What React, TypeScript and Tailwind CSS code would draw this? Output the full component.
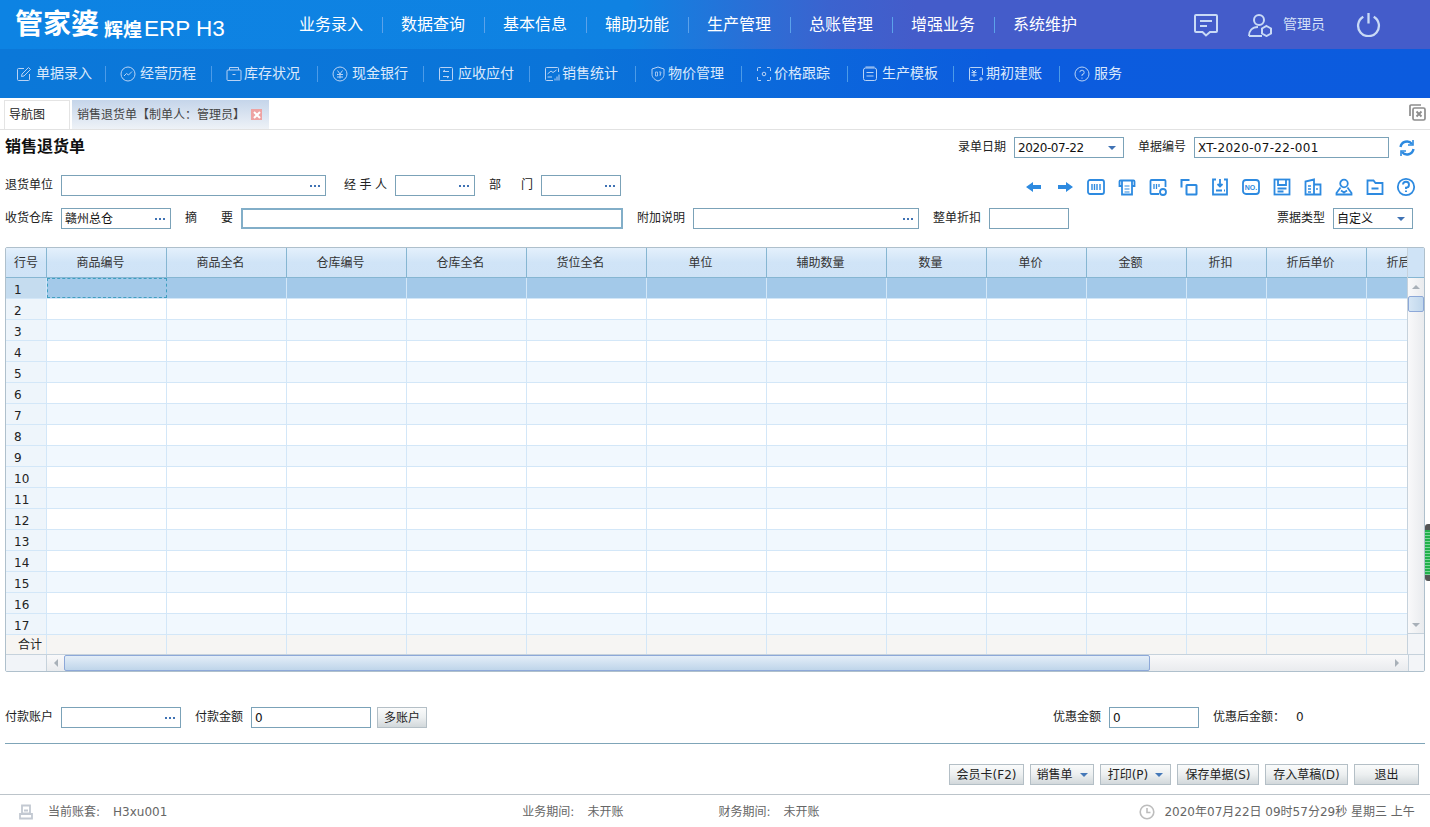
import type { ReactNode } from "react";

const cjk = "font-['DejaVu_Sans','Noto_Sans_CJK_SC',sans-serif]";

// white line icons for the second nav bar, all on a 16x16 box
const navIcons: Record<string, ReactNode> = {
  edit: (
    <>
      <path d="M8 2.500H2.500a1 1 0 0 0-1 1v10a1 1 0 0 0 1 1h10a1 1 0 0 0 1-1V8" />
      <path d="M5.500 10.500l.5-2.500L12.500 1.500l2 2L8 10z" />
    </>
  ),
  trend: (
    <>
      <circle cx="8" cy="8" r="7" />
      <path d="M4 10l2.500-2.500 2 1.500L12 5.500" />
    </>
  ),
  box: (
    <>
      <rect x="1" y="4" width="14" height="10.500" rx="1" />
      <path d="M3.500 4V1.500h9V4M6.500 8.500h3" />
    </>
  ),
  yen: (
    <>
      <circle cx="8" cy="8" r="7" />
      <path d="M5.500 4.500L8 8l2.500-3.500M5 8.500h6M5 11h6M8 8v4.500" />
    </>
  ),
  swap: (
    <>
      <rect x="1.500" y="1.500" width="13" height="13" rx="1" />
      <path d="M11 5.500H5L7 4M5 10.500h6L9 12" />
    </>
  ),
  chart: (
    <>
      <path d="M14.500 6V2.500a1 1 0 0 0-1-1h-11a1 1 0 0 0-1 1v11a1 1 0 0 0 1 1H9" />
      <path d="M3.500 8L7 5l2 1.500L12.500 4M3.500 11H8M11 14.500v-2M13 14.500v-4M15 14.500v-6" />
    </>
  ),
  shield: (
    <>
      <path d="M8 1l6 2v5.500c0 3-3 5.500-6 6.500-3-1-6-3.500-6-6.500V3z" />
      <path d="M5.500 6h2v4h-2zM9 6h2l-1 4M9.500 8h1.500" strokeWidth="0.800" />
    </>
  ),
  scan: (
    <>
      <path d="M5 1.500H2.500a1 1 0 0 0-1 1V5M11 1.500h2.500a1 1 0 0 1 1 1V5M5 14.500H2.500a1 1 0 0 1-1-1V11M11 14.500h2.500a1 1 0 0 0 1-1V11" />
      <circle cx="8" cy="8" r="1.800" />
    </>
  ),
  template: (
    <>
      <rect x="1.500" y="2" width="13" height="12.500" rx="2" />
      <path d="M4.500 6.500h7M4.500 10h7M3.500 1h9" />
    </>
  ),
  ledger: (
    <>
      <path d="M14.500 9V2.500a1 1 0 0 0-1-1h-11a1 1 0 0 0-1 1v11a1 1 0 0 0 1 1H10" />
      <path d="M4 4l2 2 2-2M3.500 6.500h5M3.500 9h5M6 6v5M13 11v4M11 13h4" />
    </>
  ),
  help: (
    <>
      <circle cx="8" cy="8" r="7" />
      <path d="M5.800 6.200A2.200 2.200 0 1 1 8 8.600V10M8 11.600v1" />
    </>
  ),
};

const topMenu = ["业务录入", "数据查询", "基本信息", "辅助功能", "生产管理", "总账管理", "增强业务", "系统维护"];

const subMenu = [
  { label: "单据录入", icon: "edit", pad: "pl-[4px]" },
  { label: "经营历程", icon: "trend", pad: "pl-[4px]" },
  { label: "库存状况", icon: "box", pad: "pl-[2px]" },
  { label: "现金银行", icon: "yen", pad: "pl-[4px]" },
  { label: "应收应付", icon: "swap", pad: "pl-[4px]" },
  { label: "销售统计", icon: "chart", pad: "pl-[2px]" },
  { label: "物价管理", icon: "shield", pad: "pl-[2px]" },
  { label: "价格跟踪", icon: "scan", pad: "pl-[2px]" },
  { label: "生产模板", icon: "template", pad: "pl-[4px]" },
  { label: "期初建账", icon: "ledger", pad: "pl-[2px]" },
  { label: "服务", icon: "help", pad: "pl-[4px]" },
];

const columns = [
  { title: "商品编号", width: "w-[120px]" },
  { title: "商品全名", width: "w-[120px]" },
  { title: "仓库编号", width: "w-[120px]" },
  { title: "仓库全名", width: "w-[120px]" },
  { title: "货位全名", width: "w-[120px]" },
  { title: "单位", width: "w-[120px]" },
  { title: "辅助数量", width: "w-[120px]" },
  { title: "数量", width: "w-[100px]" },
  { title: "单价", width: "w-[100px]" },
  { title: "金额", width: "w-[100px]" },
  { title: "折扣", width: "w-[80px]" },
  { title: "折后单价", width: "w-[100px]" },
  { title: "折后金额", width: "w-[100px]" },
];

const rows = Array.from({ length: 17 }, (_, i) => i + 1);

// toolbar glyphs, 20x20, filled in the same blue
const toolIcons: ReactNode[] = [
  <path key="a" d="M2 10l7-5v3h8v4H9v3z" fill="#2d8ae0" stroke="none" />,
  <path key="b" d="M18 10l-7-5v3H3v4h8v3z" fill="#2d8ae0" stroke="none" />,
  <g key="c">
    <rect x="2" y="3" width="16" height="14" rx="2" />
    <path d="M6 7v6M8.500 7v6M11 7v6M14 7v6" strokeWidth="1.400" />
  </g>,
  <g key="d">
    <path d="M5 9H2.500V4.500a1 1 0 0 1 1-1h13a1 1 0 0 1 1 1V9H15" />
    <path d="M5 3.500V17.500h10V3.500" />
    <path d="M7.500 9h5M7.500 12h5M7.500 15h5" strokeWidth="1.200" />
  </g>,
  <g key="e">
    <path d="M11 17H3.500a1 1 0 0 1-1-1V4a1 1 0 0 1 1-1h13a1 1 0 0 1 1 1v6" />
    <path d="M6 7v5M8.500 7v5M11 7v3" strokeWidth="1.300" />
    <circle cx="15" cy="15" r="3" />
  </g>,
  <g key="f">
    <path d="M2.500 10.500V3h8" strokeWidth="2" />
    <rect x="7.500" y="8" width="10" height="9.500" rx="0.500" strokeWidth="2" />
  </g>,
  <g key="g">
    <path d="M6 2.500H3v15h14v-15h-3" />
    <path d="M10 2v7M7.500 7l2.500 2.500L12.500 7M6 13.500h6M14 13.500h1" />
  </g>,
  <g key="h">
    <rect x="2" y="3" width="16" height="14" rx="3" />
    <text x="10" y="13" textAnchor="middle" fontSize="7" fontWeight="700" fill="#2d8ae0" stroke="none" fontFamily="'Liberation Sans',sans-serif">
      NO.
    </text>
  </g>,
  <g key="i">
    <rect x="2.500" y="2.500" width="15" height="15" />
    <path d="M6 2.500v5.500h8V2.500M5.500 11.500h9M5.500 14.500h6" />
  </g>,
  <g key="j">
    <path d="M2.500 17.500V4.500L11 2.500v15zM11 7.500h6.500v10H11" />
    <path d="M5 9h3M5 12h3M5 15h3M14 11v2" strokeWidth="1.400" />
  </g>,
  <g key="k">
    <circle cx="10" cy="6.500" r="3.800" />
    <path d="M6.500 10.500L2.500 16v1.500h15V16l-4-5.500M7 13.500l3 2 3-2" />
  </g>,
  <g key="l">
    <path d="M2.500 17V3.500h6l2 2.500h7v11z" />
    <path d="M6.500 11.500h7" strokeWidth="2" />
  </g>,
  <g key="m">
    <circle cx="10" cy="10" r="8.200" />
    <path d="M7 7.500a3 3 0 1 1 3 3.200V12M10 13.600v1.500" strokeWidth="1.900" />
  </g>,
];

function FieldLabel({ children, className = "" }: { children: ReactNode; className?: string }) {
  return <span className={`text-[12px] leading-[21px] text-[#222] whitespace-pre ${className}`}>{children}</span>;
}

// label whose characters are spread over a fixed width
function SpreadLabel({ chars, className }: { chars: string[]; className: string }) {
  return (
    <span className={`flex justify-between text-[12px] leading-[21px] text-[#222] ${className}`}>
      {chars.map((c) => (
        <span key={c}>{c}</span>
      ))}
    </span>
  );
}

function Field({
  width,
  value,
  dots,
  arrow,
  thick,
  valueClass = "",
}: {
  width: string;
  value?: string;
  dots?: boolean;
  arrow?: boolean;
  thick?: boolean;
  valueClass?: string;
}) {
  return (
    <div
      className={`${width} h-[21px] flex items-center justify-between bg-white pl-[3px] pr-[4px] text-[12px] text-[#111] ${
        thick ? "border-2 border-[#82aec8]" : "border border-[#7ba2b8]"
      }`}
    >
      <span className={`whitespace-nowrap ${valueClass}`}>{value}</span>
      {dots && (
        <span className="flex gap-[2px] pr-[1px]">
          <i className="size-[2px] bg-[#3f72b4]" />
          <i className="size-[2px] bg-[#3f72b4]" />
          <i className="size-[2px] bg-[#3f72b4]" />
        </span>
      )}
      {arrow && <i className="mr-[3px] border-x-[4px] border-t-[4px] border-x-transparent border-t-[#3f72b4]" />}
    </div>
  );
}

function ActionButton({ children, width, arrow }: { children: ReactNode; width: string; arrow?: boolean }) {
  return (
    <div
      className={`${width} h-[21px] flex items-center justify-center gap-[7px] border border-[#b4bfc6] bg-gradient-to-b from-[#fafbfb] via-[#eceff0] to-[#d2d8db] text-[12px] text-[#222]`}
    >
      <span className="whitespace-nowrap">{children}</span>
      {arrow && <i className="border-x-[4px] border-t-[4px] border-x-transparent border-t-[#4478b8]" />}
    </div>
  );
}

export default function App() {
  return (
    <div className={`relative h-[827px] w-[1430px] overflow-hidden bg-white ${cjk}`}>
      {/* top bar */}
      <header className="flex h-[49px] items-center bg-[linear-gradient(90deg,#0d83e3_0%,#0f82e2_44%,#3b63cf_58%,#445cca_64%,#445cca_100%)]">
        <div className="ml-[15px] flex w-[284px] items-end whitespace-nowrap text-white">
          <span className="w-[89px] text-[28px] font-bold leading-[36px]">管家婆</span>
          <span className="mb-[1px] w-[40px] text-[19px] font-bold leading-[24px]">辉煌</span>
          <span className="mb-[1px] font-['Liberation_Sans',sans-serif] text-[22.500px] leading-[26px]">ERP H3</span>
        </div>
        <nav className="flex items-center">
          {topMenu.map((item, i) => (
            <div key={item} className="flex items-center">
              <span className="w-[64px] whitespace-nowrap text-[16px] text-white">{item}</span>
              {i < topMenu.length - 1 && <i className="mx-[18.500px] h-[16px] w-px bg-[#5ba2ea]" />}
            </div>
          ))}
        </nav>
        <div className="ml-[116px] flex items-center">
          <svg viewBox="0 0 26 24" className="h-[24px] w-[26px]" fill="none" stroke="#c9daf6" strokeWidth="2">
            <path d="M3 2h20a1 1 0 0 1 1 1v15a1 1 0 0 1-1 1h-6l-4 3.500L9.500 19H3a1 1 0 0 1-1-1V3a1 1 0 0 1 1-1z" />
            <path d="M7 8h12M7 13h7" />
          </svg>
          <svg viewBox="0 0 26 24" className="ml-[28px] h-[24px] w-[26px]" fill="none" stroke="#c9daf6" strokeWidth="2">
            <circle cx="12" cy="7" r="5" />
            <path d="M2 23c0-5 3-9 9-9M2 23h13" />
            <path d="M19.500 13l4.500 2.500v5L19.500 23 15 20.500v-5z" />
          </svg>
          <span className="ml-[10px] text-[14px] text-[#d4e0f7]">管理员</span>
          <svg viewBox="0 0 24 24" className="ml-[31px] h-[25px] w-[25px]" fill="none" stroke="#c9daf6" strokeWidth="2.200">
            <path d="M7 4.500A10 10 0 1 0 17 4.500M12 1v10" />
          </svg>
        </div>
      </header>

      {/* second nav */}
      <nav className="flex h-[49px] items-center bg-[linear-gradient(90deg,#0b78d9_0%,#0a74d9_40%,#0c5cde_70%,#0c5bde_100%)] pl-[16px]">
        {subMenu.map((item, i) => (
          <div key={item.label} className="flex items-center">
            <svg viewBox="0 0 16 16" className="h-[16px] w-[16px] shrink-0" fill="none" stroke="#b9d3f5" strokeWidth="1">
              {navIcons[item.icon]}
            </svg>
            <span className={`w-[60px] whitespace-nowrap text-[14px] text-[#dbe9fb] ${item.pad}`}>{item.label}</span>
            {i < subMenu.length - 1 && <i className={`${i === 0 ? "ml-[13px]" : "ml-[15px]"} mr-[14px] h-[16px] w-px bg-[#4c9be8]`} />}
          </div>
        ))}
      </nav>

      {/* tabs */}
      <div className="flex h-[32px] border-b border-[#e2e2e2] pl-[4px] pt-[2px]">
        <div className="flex h-[29px] w-[66px] items-center border border-b-0 border-[#e4e4e4] pl-[4px] text-[12px] text-[#222]">导航图</div>
        <div className="ml-[2px] flex h-[29px] w-[197px] items-center gap-[9px] bg-gradient-to-b from-[#c5d5ea] to-[#eef2f7] pl-[5px] text-[12px] text-[#444]">
          <span className="w-[165px] whitespace-nowrap">销售退货单【制单人：管理员】</span>
          <span className="flex size-[11px] items-center justify-center bg-[#eea3a3]">
            <svg viewBox="0 0 8 8" className="size-[8px]" stroke="#fff" strokeWidth="2">
              <path d="M1 1l6 6M7 1L1 7" />
            </svg>
          </span>
        </div>
        <svg viewBox="0 0 18 18" className="ml-auto mr-[4px] mt-[3px] size-[18px]" fill="none" stroke="#8d8d8d" strokeWidth="1.700">
          <path d="M2 13V3a1 1 0 0 1 1-1h10" />
          <rect x="5" y="5" width="12" height="12" rx="1.500" />
          <path d="M8.500 8.500l5 5M13.500 8.500l-5 5" strokeWidth="1.900" />
        </svg>
      </div>

      <main className="px-[5px]">
        {/* title row */}
        <div className="flex h-[34px] items-start pt-[7px]">
          <h1 className="text-[16px] font-bold leading-[20px] text-[#111]">销售退货单</h1>
          <FieldLabel className="ml-auto">录单日期</FieldLabel>
          <div className="ml-[8px]">
            <Field width="w-[110px]" value="2020-07-22" valueClass="tracking-[-0.400px]" arrow />
          </div>
          <FieldLabel className="ml-[14px]">单据编号</FieldLabel>
          <div className="ml-[8px]">
            <Field width="w-[195px]" value="XT-2020-07-22-001" valueClass="tracking-[0.300px]" />
          </div>
          <svg viewBox="0 0 18 18" className="ml-[9px] mr-[9px] mt-[2px] size-[18px]" fill="none" stroke="#2d8ae0" strokeWidth="2.400">
            <path d="M2.500 8A6.500 6.500 0 0 1 14 5M15.500 10A6.500 6.500 0 0 1 4 13" />
            <path d="M15 1v5h-5M3 17v-5h5" strokeWidth="1.600" />
          </svg>
        </div>

        {/* supplier row */}
        <div className="mt-[11px] flex h-[21px]">
          <FieldLabel>退货单位</FieldLabel>
          <div className="ml-[8px]">
            <Field width="w-[265px]" dots />
          </div>
          <SpreadLabel chars={["经", "手", "人"]} className="ml-[18px] w-[43px]" />
          <div className="ml-[8px]">
            <Field width="w-[80px]" dots />
          </div>
          <SpreadLabel chars={["部", "门"]} className="ml-[14px] w-[44px]" />
          <div className="ml-[8px]">
            <Field width="w-[80px]" dots />
          </div>
          <div className="ml-auto mr-[9px] mt-[2px] flex gap-[11px]">
            {toolIcons.map((icon, i) => (
              <svg key={i} viewBox="0 0 20 20" className="size-[20px]" fill="none" stroke="#2d8ae0" strokeWidth="1.800">
                {icon}
              </svg>
            ))}
          </div>
        </div>

        {/* warehouse row */}
        <div className="mt-[12px] flex h-[21px]">
          <FieldLabel>收货仓库</FieldLabel>
          <div className="ml-[8px]">
            <Field width="w-[110px]" value="赣州总仓" dots />
          </div>
          <SpreadLabel chars={["摘", "要"]} className="ml-[14px] w-[48px]" />
          <div className="ml-[8px]">
            <Field width="w-[382px]" thick />
          </div>
          <FieldLabel className="ml-[14px]">附加说明</FieldLabel>
          <div className="ml-[8px]">
            <Field width="w-[226px]" dots />
          </div>
          <FieldLabel className="ml-[14px]">整单折扣</FieldLabel>
          <div className="ml-[8px]">
            <Field width="w-[80px]" />
          </div>
          <FieldLabel className="ml-auto">票据类型</FieldLabel>
          <div className="ml-[8px] mr-[12px]">
            <Field width="w-[80px]" value="自定义" arrow />
          </div>
        </div>

        {/* grid */}
        <section className="mt-[18px] flex h-[425px] w-[1420px] flex-col overflow-hidden rounded-[2px] border border-[#afc0cc] text-[12px]">
          <div className="flex min-h-0 flex-1">
            <div className="w-[1402px] overflow-hidden">
              <div className="flex h-[30px] w-[1500px] border-b border-[#86b6d2] bg-gradient-to-b from-[#e4f0fc] via-[#d0e4f7] to-[#cfe3f6] text-[#333]">
                <div className="flex w-[41px] shrink-0 items-center justify-center border-r border-[#86b6d2]">行号</div>
                {columns.map((col) => (
                  <div key={col.title} className={`${col.width} flex shrink-0 items-center justify-center border-r border-[#86b6d2] pr-[12px]`}>
                    {col.title}
                  </div>
                ))}
              </div>
              {rows.map((row) => (
                <div
                  key={row}
                  className={`flex h-[21px] w-[1500px] border-b border-[#d3e7f8] ${
                    row === 1 ? "bg-[#a3c9e9]" : row % 2 === 1 ? "bg-[#f1f8fe]" : "bg-white"
                  }`}
                >
                  <div
                    className={`flex w-[41px] shrink-0 items-center pl-[8px] pt-[3px] text-[#222] border-r border-[#d3e7f8] ${
                      row === 1 ? "bg-[#c5dcef]" : "bg-[#eef5fb]"
                    }`}
                  >
                    {row}
                  </div>
                  {columns.map((col, i) => (
                    <div
                      key={col.title}
                      className={`${col.width} shrink-0 ${
                        row === 1 && i === 0 ? "border border-dashed border-[#3f9fc0]" : "border-r border-[#d3e7f8]"
                      }`}
                    />
                  ))}
                </div>
              ))}
              <div className="flex h-[20px] w-[1500px] bg-[#f6f5f3]">
                <div className="flex w-[41px] shrink-0 justify-end pr-[4px] pt-[2px] text-[#222] border-r border-[#d3e7f8] leading-[16px]">合计</div>
                {columns.map((col) => (
                  <div key={col.title} className={`${col.width} shrink-0 border-r border-[#d3e7f8]`} />
                ))}
              </div>
            </div>
            {/* vertical scrollbar */}
            <div className="flex w-[17px] flex-col border-l border-[#c6d2dc]">
              <div className="h-[30px] bg-[#cfe3f6] border-b border-[#86b6d2]" />
              <div className="flex flex-1 flex-col bg-gradient-to-r from-[#f9f9fa] to-[#e9ebee]">
                <div className="flex h-[18px] items-center justify-center">
                  <i className="border-x-[4px] border-b-[4px] border-x-transparent border-b-[#a8b0b8]" />
                </div>
                <div className="h-[16px] rounded-[2px] border border-[#8da8d8] bg-gradient-to-r from-[#d6e6f5] to-[#c0d7ec]" />
                <div className="mt-auto flex h-[17px] items-center justify-center border-b border-[#c6d2dc]">
                  <i className="border-x-[4px] border-t-[4px] border-x-transparent border-t-[#a8b0b8]" />
                </div>
              </div>
              <div className="h-[20px] bg-[#f3f5f8]" />
            </div>
          </div>
          {/* horizontal scrollbar */}
          <div className="flex h-[17px] border-t border-[#c6d2dc]">
            <div className="w-[41px] border-r border-[#c6d2dc] bg-[#f1f4f8]" />
            <div className="flex w-[1361px] bg-gradient-to-b from-[#f9f9fa] to-[#e9ebee]">
              <div className="flex w-[17px] items-center justify-center">
                <i className="border-y-[4px] border-r-[4px] border-y-transparent border-r-[#a8b0b8]" />
              </div>
              <div className="w-[1086px] rounded-[2px] border border-[#8da8d8] bg-gradient-to-b from-[#e4eef8] to-[#bfd5ea]" />
              <div className="ml-auto flex w-[22px] items-center justify-center">
                <i className="border-y-[4px] border-l-[4px] border-y-transparent border-l-[#a8b0b8]" />
              </div>
            </div>
            <div className="flex-1 border-l border-[#c6d2dc] bg-[#f3f5f8]" />
          </div>
        </section>

        {/* payment row */}
        <div className="mt-[35px] flex h-[21px]">
          <FieldLabel>付款账户</FieldLabel>
          <div className="ml-[8px]">
            <Field width="w-[120px]" dots />
          </div>
          <FieldLabel className="ml-[14px]">付款金额</FieldLabel>
          <div className="ml-[8px]">
            <Field width="w-[120px]" value="0" />
          </div>
          <div className="ml-[6px]">
            <ActionButton width="w-[50px]">多账户</ActionButton>
          </div>
          <FieldLabel className="ml-[626px]">优惠金额</FieldLabel>
          <div className="ml-[8px]">
            <Field width="w-[90px]" value="0" />
          </div>
          <FieldLabel className="ml-[14px]">优惠后金额：</FieldLabel>
          <FieldLabel className="ml-[11px]">0</FieldLabel>
        </div>

        <div className="mt-[15px] h-px w-[1420px] bg-[#7fa5b8]" />

        {/* action buttons */}
        <div className="mt-[20px] flex h-[21px] justify-end gap-[6px] pr-[6px]">
          <ActionButton width="w-[75px]">会员卡(F2)</ActionButton>
          <ActionButton width="w-[64px]" arrow>销售单</ActionButton>
          <ActionButton width="w-[71px]" arrow>打印(P)</ActionButton>
          <ActionButton width="w-[82px]">保存单据(S)</ActionButton>
          <ActionButton width="w-[83px]">存入草稿(D)</ActionButton>
          <ActionButton width="w-[65px]">退出</ActionButton>
        </div>
      </main>

      {/* status bar */}
      <footer className="mt-[9px] flex h-[33px] items-center border-t border-[#bcc4ca] pt-[2px] text-[12px] text-[#666]">
        <svg viewBox="0 0 16 16" className="ml-[18px] size-[16px]" fill="none" stroke="#c3c9d2" strokeWidth="1.800">
          <path d="M4 1.500h8v8H4zM2 10h12v4.500H2zM6 6.500h4" />
        </svg>
        <span className="ml-[14px]">当前账套:</span>
        <span className="ml-[13px]">H3xu001</span>
        <span className="ml-[355px]">业务期间:</span>
        <span className="ml-[13px]">未开账</span>
        <span className="ml-[95px]">财务期间:</span>
        <span className="ml-[13px]">未开账</span>
        <svg viewBox="0 0 16 16" className="ml-[320px] size-[16px]" fill="none" stroke="#bdbdbd" strokeWidth="1.600">
          <circle cx="8" cy="8" r="6.800" />
          <path d="M8 4v4.500h3.500" />
        </svg>
        <span className="ml-[9px] whitespace-nowrap">2020年07月22日 09时57分29秒 星期三 上午</span>
      </footer>

      {/* green marker overlapping the right edge */}
      <div className="absolute right-0 top-[524px] h-[57px] w-[5px] rounded-l-[3px] bg-[repeating-linear-gradient(180deg,#22b14c_0px,#22b14c_2px,#7ed69a_2px,#7ed69a_3px)] border-y-[6px] border-[#555]" />
    </div>
  );
}
